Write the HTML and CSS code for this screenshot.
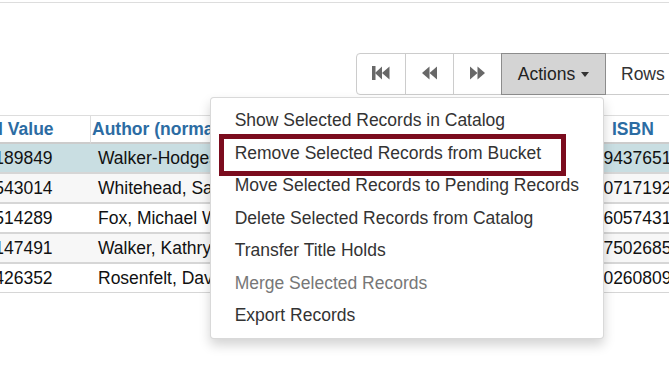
FILE: index.html
```html
<!DOCTYPE html>
<html lang="en">
<head>
    <meta charset="UTF-8">
    <meta name="viewport" content="width=device-width, initial-scale=1.0">
    <title>Record Bucket</title>
    <link rel="stylesheet" href="styles.css">
</head>
<body>
<div class="page">
    <div class="topbar"></div>

    <div class="toolbar">
        <div class="btn-group">
            <button class="btn btn-icon" title="Start">
                <svg width="18" height="14" viewBox="0 0 18 14"><rect x="0" y="0" width="3.5" height="14"/><polygon points="3,7 10,0.5 10,13.5"/><polygon points="10,7 17.5,0.5 17.5,13.5"/></svg>
            </button>
            <button class="btn btn-icon" title="Previous">
                <svg width="15" height="14" viewBox="0 0 15 14"><polygon points="0,7 7.5,0.5 7.5,13.5"/><polygon points="7.5,7 15,0.5 15,13.5"/></svg>
            </button>
            <button class="btn btn-icon" title="Next">
                <svg width="15" height="14" viewBox="0 0 15 14"><polygon points="15,7 7.5,0.5 7.5,13.5"/><polygon points="7.5,7 0,0.5 0,13.5"/></svg>
            </button>
            <div class="dropdown">
                <button class="btn btn-actions">Actions <span class="caret"></span></button>
                <ul class="dropdown-menu">
                    <li><a href="#">Show Selected Records in Catalog</a></li>
                    <li><a href="#">Remove Selected Records from Bucket</a></li>
                    <li><a href="#">Move Selected Records to Pending Records</a></li>
                    <li><a href="#">Delete Selected Records from Catalog</a></li>
                    <li><a href="#">Transfer Title Holds</a></li>
                    <li class="disabled"><a href="#">Merge Selected Records</a></li>
                    <li><a href="#">Export Records</a></li>
                    <!-- callout around the item being explained -->
                    <span class="callout"></span>
                </ul>
            </div>
            <button class="btn btn-rows">Rows 25 <span class="caret"></span></button>
        </div>
    </div>

    <div class="grid-wrap">
        <table class="grid">
            <colgroup>
                <col class="c-tcn">
                <col class="c-author">
                <col class="c-isbn">
            </colgroup>
            <thead>
                <tr>
                    <th class="h-tcn">TCN Value</th>
                    <th>Author (normalized)</th>
                    <th class="h-isbn">ISBN</th>
                </tr>
            </thead>
            <tbody>
                <tr class="selected">
                    <td>274189849</td>
                    <td class="author">Walker-Hodges, Nicole</td>
                    <td>9780439437651 </td>
                </tr>
                <tr class="odd">
                    <td>321543014</td>
                    <td class="author">Whitehead, Sandra</td>
                    <td>9780440717192, 0440717192</td>
                </tr>
                <tr>
                    <td>615514289</td>
                    <td class="author">Fox, Michael W.</td>
                    <td>9780316057431]</td>
                </tr>
                <tr class="odd">
                    <td>872147491</td>
                    <td class="author">Walker, Kathryn</td>
                    <td>9780307502685</td>
                </tr>
                <tr>
                    <td>560426352</td>
                    <td class="author">Rosenfelt, David</td>
                    <td>9780060260809, 0060260807</td>
                </tr>
            </tbody>
        </table>
    </div>
</div>
</body>
</html>
```

FILE: styles.css
```css
body {
    font-family: "Liberation Sans", Arial, sans-serif;
    font-size: 17.5px;
    color: #333;
    background-color: #fff;
    margin: 0;
}

.page {
    height: 368px;
    overflow: hidden;
}

.topbar {
    height: 2px;
    border-bottom: 1px solid #ddd;
}

.toolbar {
    margin-top: 50px;
}

.btn-group {
    display: flex;
    margin-left: 356px;
    width: max-content;
}

.btn {
    display: flex;
    align-items: center;
    justify-content: center;
    height: 42px;
    margin: 0 0 0 -1px;
    padding: 0 15px;
    border: 1px solid #ccc;
    background-color: #fff;
    color: #333;
    font-family: inherit;
    font-size: 17.5px;
    cursor: pointer;
}

.btn-icon {
    width: 49px;
    padding: 0;
    fill: #686868;
}

.btn-icon svg {
    margin-top: -3px;
}

.btn-group > .btn:first-child {
    width: 50px;
    margin-left: 0;
    border-radius: 4px 0 0 4px;
}

.dropdown {
    position: relative;
    margin-left: -1px;
}

.btn-actions {
    width: 105px;
    margin: 0;
    padding: 0;
    background-color: #d4d4d4;
    border-color: #8c8c8c;
    color: #222;
    position: relative;
    z-index: 2;
}

.btn-rows {
    justify-content: flex-start;
}

.caret {
    display: inline-block;
    width: 0;
    height: 0;
    margin-left: 6px;
    border-top: 5px solid #333;
    border-left: 4.5px solid transparent;
    border-right: 4.5px solid transparent;
}

.dropdown-menu {
    position: absolute;
    top: 100%;
    right: 2px;
    z-index: 10;
    margin: 2px 0 0;
    padding: 6.25px 0;
    list-style: none;
    background-color: #fff;
    border: 1px solid rgba(0, 0, 0, 0.15);
    border-radius: 4px;
    box-shadow: 0 6px 12px rgba(0, 0, 0, 0.175);
    white-space: nowrap;
}

.dropdown-menu a {
    display: block;
    padding: 3.75px 24px;
    line-height: 25px;
    color: #333;
    text-decoration: none;
}

.dropdown-menu .disabled a {
    color: #777;
}

.callout {
    position: absolute;
    top: 36px;
    left: 8px;
    width: 347px;
    height: 42px;
    box-sizing: border-box;
    border: 5px solid #7b0c1e;
}

.grid-wrap {
    margin-top: 20px;
}

.grid {
    margin-left: -43px;
    width: 850px;
    table-layout: fixed;
    border-collapse: separate;
    border-spacing: 0;
}

.c-tcn { width: 134px; }
.c-author { width: 446px; }
.c-isbn { width: 270px; }

.grid th,
.grid td {
    white-space: nowrap;
    overflow: hidden;
    text-align: left;
}

.grid th {
    line-height: 26px;
    padding: 0 0 0 1px;
    color: #2c6ca3;
    font-weight: bold;
    border-top: 1px solid #ddd;
    border-bottom: 2px solid #ccc;
}

.grid th.h-tcn {
    padding-left: 10px;
    border-right: 1px solid #ddd;
}

.grid th.h-isbn {
    padding-left: 75px;
}

.grid td {
    line-height: 28px;
    padding: 0 0 0 8px;
    color: #111;
    border-bottom: 2px solid #d6d6d6;
}

.grid td.author {
    padding-left: 7px;
}

.grid tr.odd td {
    background-color: #f7f7f7;
}

.grid tr.selected td {
    background-color: #c9dee2;
}

.grid tbody tr:last-child td {
    border-bottom-width: 1px;
}
```
